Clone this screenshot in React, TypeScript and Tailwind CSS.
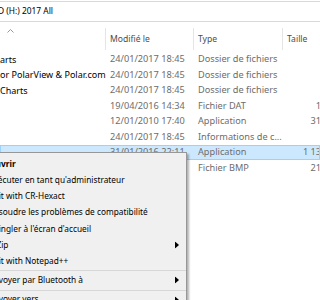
import React from "react";

const rows = [
  { name: "arts", date: "24/01/2017 18:45", type: "Dossier de fichiers", size: "" },
  { name: "or PolarView & Polar.com", date: "24/01/2017 18:45", type: "Dossier de fichiers", size: "" },
  { name: "Charts", date: "24/01/2017 18:45", type: "Dossier de fichiers", size: "" },
  { name: "", date: "19/04/2016 14:34", type: "Fichier DAT", size: "14 Ko" },
  { name: "", date: "12/01/2010 17:40", type: "Application", size: "313 Ko" },
  { name: "", date: "24/01/2017 18:45", type: "Informations de c...", size: "1 Ko" },
  { name: "", date: "31/01/2016 22:11", type: "Application", size: "1 133 Ko", selected: true },
  { name: "", date: "", type: "Fichier BMP", size: "212 Ko" },
];

type Item = { label?: string; bold?: boolean; sub?: boolean; sep?: boolean };
const menu: Item[] = [
  { label: "Ouvrir", bold: true },
  { label: "Exécuter en tant qu'administrateur" },
  { label: "Edit with CR-Hexact" },
  { label: "Résoudre les problèmes de compatibilité" },
  { label: "Épingler à l'écran d'accueil" },
  { label: "7-Zip", sub: true },
  { label: "Edit with Notepad++" },
  { sep: true },
  { label: "Envoyer par Bluetooth à", sub: true },
  { sep: true },
  { label: "Envoyer vers", sub: true },
];

function Arrow() {
  return (
    <svg width="4" height="7" viewBox="0 0 4 7" className="absolute left-[214px] top-1/2 -translate-y-1/2">
      <path d="M0 0 L4 3.5 L0 7 Z" fill="#000" />
    </svg>
  );
}

export default function App() {
  return (
    <div
      className="relative w-[320px] h-[300px] overflow-hidden bg-white text-[9px] text-black"
      style={{ fontFamily: '"Noto Sans", "Open Sans", sans-serif' }}
    >
      {/* address bar */}
      <div className="mt-[1px] h-[21px] border-y border-[#d9d9d9] flex items-center">
        <span className="ml-[-2px] whitespace-nowrap text-[8.4px]">D (H:) 2017 All</span>
      </div>
      {/* header */}
      <div className="mt-[6px] flex h-[22px] text-[8.6px] text-[#4d4d4d] whitespace-nowrap">
        <div className="relative w-[105px] shrink-0">
          <svg width="7" height="4" viewBox="0 0 7 4" className="absolute left-[7px] top-[1px]">
            <path d="M0.5 3.5 L3.5 0.5 L6.5 3.5" fill="none" stroke="#8a9bb0" strokeWidth="1" />
          </svg>
        </div>
        <div className="w-[88px] shrink-0 border-l border-[#e5e5e5] pl-[4px] flex items-center">Modifié le</div>
        <div className="w-[89px] shrink-0 border-l border-[#e5e5e5] pl-[4px] flex items-center">Type</div>
        <div className="w-[60px] shrink-0 border-l border-[#e5e5e5] pl-[4px] flex items-center">Taille</div>
      </div>
      {/* rows */}
      <div className="mt-[1.5px] flex flex-col text-[9.2px]">
        {rows.map((r, i) => (
          <div
            key={i}
            className={
              "flex h-[15.5px] items-center whitespace-nowrap " +
              (r.selected ? "bg-[#cce8ff] outline outline-1 outline-[#99d1ff] -outline-offset-1" : "")
            }
          >
            <div className="w-[105px] shrink-0 text-[9px]">{r.name}</div>
            <div className="w-[88px] shrink-0 pl-[5px] text-[#6d6d6d]">{r.date}</div>
            <div className="w-[89px] shrink-0 pl-[5px] text-[#6d6d6d]">{r.type}</div>
            <div className="w-[58px] shrink-0 text-right text-[#6d6d6d]">{r.size}</div>
          </div>
        ))}
      </div>
      {/* context menu */}
      <div className="absolute left-[-40px] top-[152px] w-[227px] bg-[#f0f0f0] border border-[#979797] shadow-[2px_2px_2px_rgba(0,0,0,0.3)] py-[3px] whitespace-nowrap text-[8.3px]">
        {menu.map((m, i) =>
          m.sep ? (
            <div key={i} className="h-[3px] flex items-center">
              <div className="h-px w-full bg-[#d7d7d7]" />
            </div>
          ) : (
            <div key={i} className={"relative h-[16.2px] flex items-center pl-[28px] " + (m.bold ? "font-bold" : "")}>
              {m.label}
              {m.sub && <Arrow />}
            </div>
          )
        )}
      </div>
    </div>
  );
}
